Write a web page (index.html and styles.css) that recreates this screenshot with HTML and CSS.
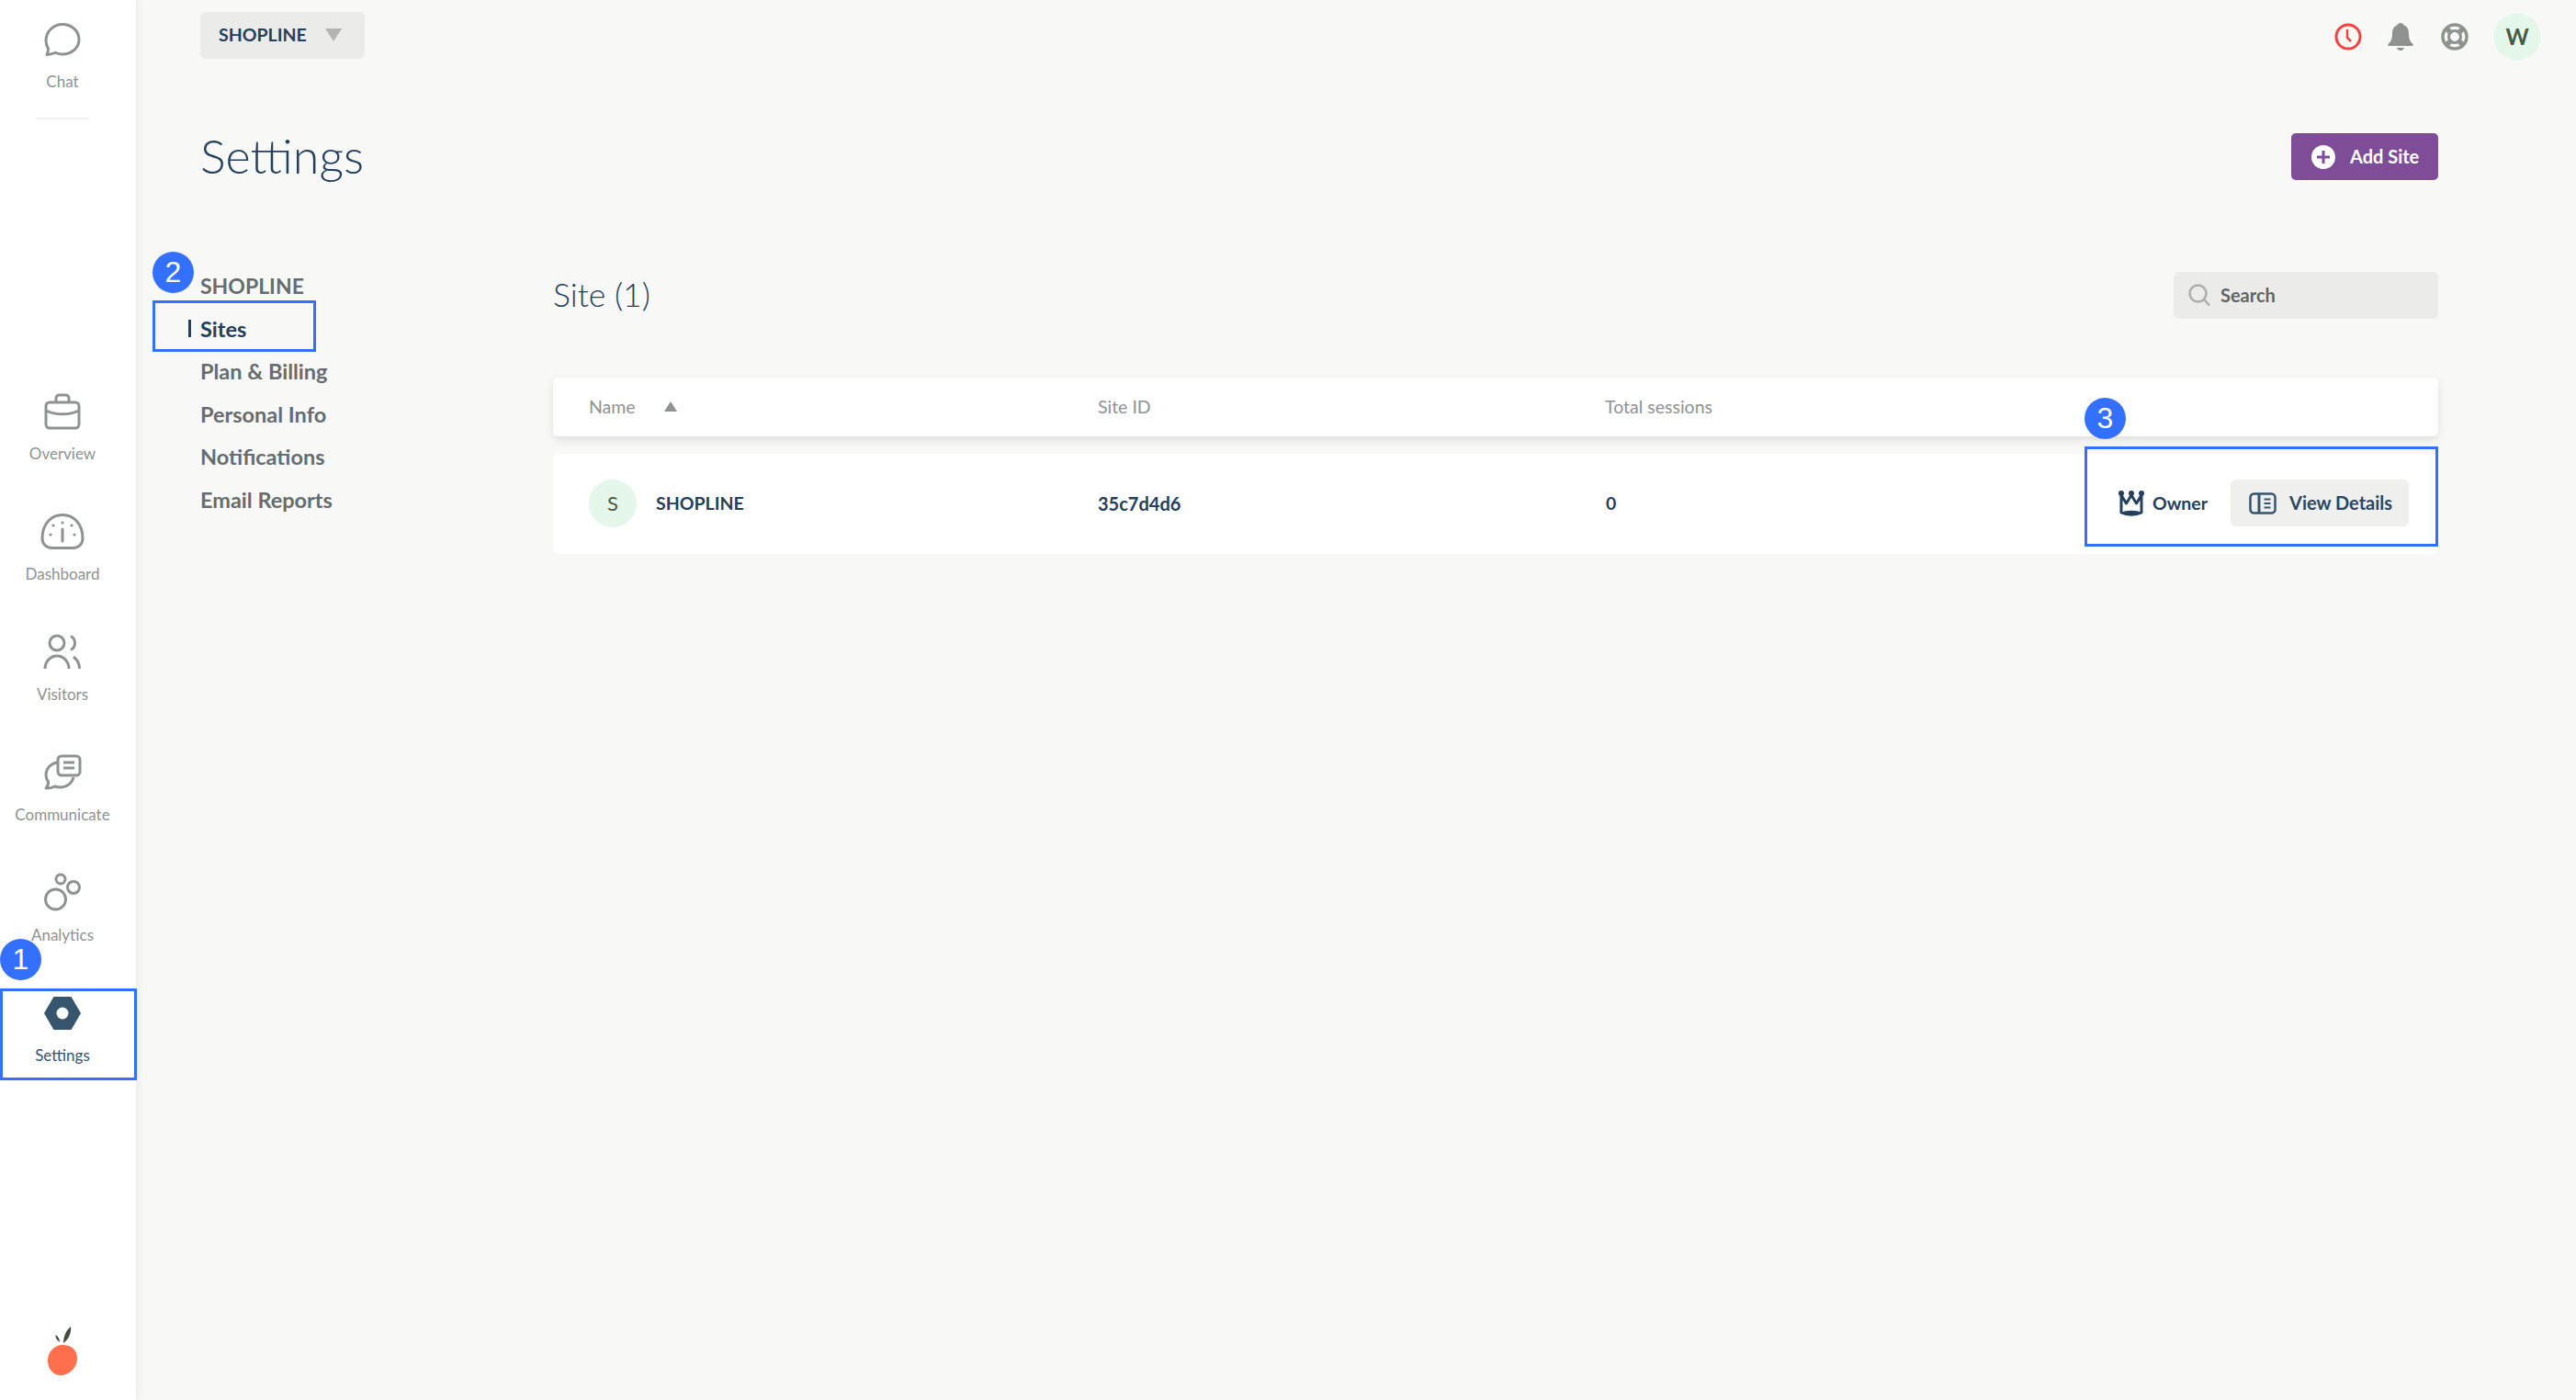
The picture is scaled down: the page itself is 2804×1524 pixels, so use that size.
FILE: index.html
```html
<!DOCTYPE html>
<html lang="en">
<head>
<meta charset="utf-8">
<title>Settings</title>
<link rel="stylesheet" href="styles.css">
</head>
<body>
<div class="app">
  <aside class="sidebar">
    <a class="nav-item">
      <span class="nav-icon"><svg width="40" height="40" viewBox="0 0 40 40"><path d="M3 36.500c.9-2.200 1.700-4.300 1.500-6.500C2.900 27.500 2 24.500 2 21.500 2 11.500 9.800 3.500 20 3.500s18 7.600 18 16.500S30.200 36 20 36c-2.800 0-5.200-.7-7.500-1.700-3 1-6 2-9.500 2.200z" fill="none" stroke="#8e9392" stroke-width="3" stroke-linejoin="round"/></svg></span>
      <span class="nav-label">Chat</span>
    </a>
    <div class="nav-divider"></div>
    <nav class="nav-list">
      <a class="nav-item">
        <span class="nav-icon"><svg width="40" height="40" viewBox="0 0 40 40" fill="none" stroke="#8e9392" stroke-width="3"><rect x="2" y="10" width="36" height="28" rx="4"/><path d="M13 10V5.500C13 3.500 14.500 2 16.500 2h7C25.500 2 27 3.500 27 5.500V10"/><path d="M2 19c11 5 25 5 36 0"/></svg></span>
        <span class="nav-label">Overview</span>
      </a>
      <a class="nav-item">
        <span class="nav-icon"><svg width="48" height="40" viewBox="0 0 48 40" fill="none" stroke="#8e9392" stroke-width="3"><path d="M2 27C2 11 12 1.500 24 1.500S46 11 46 27c0 7-5 10.500-11 10.500H13C7 37.500 2 34 2 27z"/><path d="M24 17v13" stroke-linecap="round"/><g fill="#8e9392" stroke="none"><circle cx="24" cy="10" r="1.600"/><circle cx="14" cy="13" r="1.600"/><circle cx="34" cy="13" r="1.600"/><circle cx="11" cy="23" r="1.600"/><circle cx="37" cy="23" r="1.600"/></g></svg></span>
        <span class="nav-label">Dashboard</span>
      </a>
      <a class="nav-item">
        <span class="nav-icon"><svg width="42" height="40" viewBox="0 0 42 40" fill="none" stroke="#8e9392" stroke-width="3"><circle cx="15" cy="10" r="8"/><path d="M30 2.500c2.800 1.500 4.500 4.300 4.500 7.500s-1.700 6-4.500 7.500"/><path d="M2 38c0-8 6-14 13-14s13 6 13 14"/><path d="M33 25c4 3 6.500 8 6.500 13"/></svg></span>
        <span class="nav-label">Visitors</span>
      </a>
      <a class="nav-item">
        <span class="nav-icon"><svg width="42" height="40" viewBox="0 0 42 40" fill="none" stroke="#8e9392" stroke-width="3" stroke-linejoin="round"><path d="M15 9C7.500 10.500 3 16 3 22.500c0 3 1 5.500 2.500 7.500.3 2.500-.7 5-2.500 7 3.500.3 6.500-.4 9.500-2 2 .7 4 1 6 1 7.500 0 13-4.500 14.500-11"/><rect x="16" y="2" width="24" height="21" rx="4" fill="#fff"/><path d="M22 9h12M22 15h12"/></svg></span>
        <span class="nav-label">Communicate</span>
      </a>
      <a class="nav-item">
        <span class="nav-icon"><svg width="40" height="44" viewBox="0 0 40 44" fill="none" stroke="#8e9392" stroke-width="3"><circle cx="12.500" cy="29" r="11"/><circle cx="18" cy="7" r="5"/><circle cx="32" cy="16" r="6.500"/></svg></span>
        <span class="nav-label">Analytics</span>
      </a>
      <a class="nav-item nav-item-active">
        <span class="nav-icon"><svg width="40" height="40" viewBox="0 0 40 40"><path d="M10.500 2h19L40 20 29.500 38h-19L0 20z" fill="#36556f"/><circle cx="20" cy="20" r="6.500" fill="#fff"/></svg></span>
        <span class="nav-label">Settings</span>
      </a>
    </nav>
    <div class="logo">
      <svg width="34" height="54" viewBox="0 0 34 54"><path d="M17 20c9 0 16 5 16 15 0 9-8 17-16 18C8 54 1 47 1 37 1 28 8 20 17 20z" fill="#ff6f4d"/><path d="M18 18c0-7 3-14 8-18 1 6-2 14-8 18z" fill="#454c3f"/><path d="M14 17c-3-2-5-5-4.500-8 2.500 1.500 4.500 4.500 4.500 8z" fill="#454c3f"/></svg>
    </div>
  </aside>

  <main class="main">
    <header class="topbar">
      <button class="site-select">
        <span>SHOPLINE</span>
        <svg class="caret" width="18" height="14" viewBox="0 0 18 14"><path d="M0 0h18L9 14z" fill="#b3b4b1"/></svg>
      </button>
      <div class="top-icons">
        <svg class="top-icon" width="30" height="30" viewBox="0 0 30 30" fill="none" stroke="#f5413f" stroke-width="3"><circle cx="15" cy="15" r="13"/><path d="M14 7v9l4 4" stroke-width="2.500"/></svg>
        <svg class="top-icon" width="28" height="30" viewBox="0 0 28 30"><path d="M14 0c2 0 3 1 3.500 2.300C22 4 23 8 23 12c0 4.500 1 8 4.500 11 .6.600.4 2-.8 2H1.300C.1 25-.1 23.600.5 23 4 20 5 16.500 5 12c0-4 1-8 5.500-9.700C11 1 12 0 14 0z" fill="#8e9392"/><path d="M10 27h8c-.6 2-2 3-4 3s-3.400-1-4-3z" fill="#8e9392"/></svg>
        <svg class="top-icon" width="30" height="30" viewBox="0 0 30 30" fill="none" stroke="#8e9392"><circle cx="15" cy="15" r="13" stroke-width="3.500"/><circle cx="15" cy="15" r="6.500" stroke-width="3"/><path d="M5.500 5.500l6 6M24.500 5.500l-6 6M5.500 24.500l6-6M24.500 24.500l-6-6" stroke-width="5.500"/></svg>
        <div class="avatar avatar-user">W</div>
      </div>
    </header>

    <div class="page">
      <div class="page-head">
        <h1 class="page-title">Settings</h1>
        <button class="btn-add">
          <svg width="26" height="26" viewBox="0 0 26 26"><circle cx="13" cy="13" r="13" fill="#fff"/><path d="M13 6v14M6 13h14" stroke="#7f4d97" stroke-width="3"/></svg>
          <span>Add Site</span>
        </button>
      </div>

      <div class="columns">
        <nav class="settings-nav">
          <div class="settings-group">SHOPLINE</div>
          <a class="settings-link settings-link-active">Sites</a>
          <a class="settings-link">Plan &amp; Billing</a>
          <a class="settings-link">Personal Info</a>
          <a class="settings-link">Notifications</a>
          <a class="settings-link">Email Reports</a>
        </nav>

        <section class="content">
          <div class="content-head">
            <h2 class="content-title">Site (1)</h2>
            <div class="search">
              <svg width="24" height="25" viewBox="0 0 24 25" fill="none" stroke="#adaeac" stroke-width="2.500"><circle cx="10.500" cy="10.500" r="9"/><path d="M17 17l6 6.500"/></svg>
              <span>Search</span>
            </div>
          </div>

          <div class="table-row table-header">
            <div class="th-name"><span>Name</span><svg width="14" height="11" viewBox="0 0 14 11"><path d="M7 0l7 11H0z" fill="#8e9392"/></svg></div>
            <div>Site ID</div>
            <div>Total sessions</div>
            <div></div>
          </div>

          <div class="table-row table-body">
            <div class="site-cell"><div class="avatar avatar-site">S</div><span>SHOPLINE</span></div>
            <div class="site-id">35c7d4d6</div>
            <div class="session-count">0</div>
            <div class="actions">
              <span class="owner">
                <svg width="28" height="28" viewBox="0 0 28 28"><path d="M3 5l5.500 9L14 5l5.500 9L25 5v19c-6 3-16 3-22 0z" fill="none" stroke="#23405c" stroke-width="3" stroke-linejoin="round"/><path d="M3 24c5-3 17-3 22 0-5 4-17 4-22 0z" fill="#23405c"/><circle cx="3" cy="3" r="3" fill="#23405c"/><circle cx="14" cy="3" r="3" fill="#23405c"/><circle cx="25" cy="3" r="3" fill="#23405c"/></svg>
                <span>Owner</span>
              </span>
              <button class="btn-details">
                <svg width="30" height="24" viewBox="0 0 30 24" fill="none" stroke="#36556f" stroke-width="2.500"><rect x="1.500" y="1.500" width="27" height="21" rx="4"/><path d="M11 1.500v21" stroke-width="3"/><path d="M16.500 7.500h7M16.500 12h7M16.500 16.500h7" stroke-width="1.800"/></svg>
                <span>View Details</span>
              </button>
            </div>
          </div>
        </section>
      </div>
    </div>
  </main>
</div>

<div class="mark mark-settings"></div>
<div class="mark mark-sites"></div>
<div class="mark mark-actions"></div>
<div class="badge badge-1">1</div>
<div class="badge badge-2">2</div>
<div class="badge badge-3">3</div>
</body>
</html>
```
FILE: styles.css
```css
* { box-sizing: border-box; }

html, body {
  margin: 0;
  height: 1524px;
  overflow: hidden;
}

body {
  position: relative;
  width: 2804px;
  background: #f8f8f6;
  font-family: Lato, "Open Sans", sans-serif;
  color: #23405c;
}

button {
  border: 0;
  font: inherit;
  cursor: pointer;
}

.app {
  display: flex;
  height: 100%;
}

/* Sidebar */
.sidebar {
  flex: 0 0 148px;
  display: flex;
  flex-direction: column;
  align-items: center;
  padding: 23px 12px 0 0;
  background: #fff;
  box-shadow: 2px 0 8px rgba(0, 0, 0, 0.06);
}

.nav-item {
  display: flex;
  flex-direction: column;
  align-items: center;
  gap: 16px;
  height: 76px;
  width: 100%;
}

.nav-icon {
  display: flex;
  justify-content: center;
  align-items: center;
  height: 40px;
}

.nav-label {
  height: 20px;
  font-size: 17px;
  line-height: 20px;
  white-space: nowrap;
  color: #8e9392;
}

.nav-item-active .nav-label { color: #36556f; }

.nav-divider {
  width: 58px;
  height: 2px;
  margin-top: 29px;
  background: #f1f1f0;
}

.nav-list {
  display: flex;
  flex-direction: column;
  gap: 55px;
  width: 100%;
  margin-top: 298px;
}

.logo {
  margin-top: auto;
  height: 80px;
}

/* Main */
.main {
  flex: 1;
  display: flex;
  flex-direction: column;
  min-width: 0;
}

.topbar {
  display: flex;
  justify-content: space-between;
  align-items: flex-start;
  height: 145px;
  padding: 13px 37px 0 70px;
}

.site-select {
  display: flex;
  align-items: center;
  gap: 20px;
  width: 179px;
  height: 51px;
  padding: 0 0 2px 20px;
  border-radius: 6px;
  background: #ebebe9;
  color: #23405c;
  font-size: 19.500px;
  font-weight: 700;
}

.top-icons {
  display: flex;
  align-items: center;
  height: 54px;
}

.top-icon { flex: none; margin-right: 28px; }
.top-icon:nth-child(2) { margin-right: 30px; }
.top-icon:nth-child(3) { margin-right: 26px; }

.avatar {
  display: flex;
  justify-content: center;
  align-items: center;
  flex: none;
  border-radius: 50%;
  background: #e5f6ea;
  color: #4b5a45;
}

.avatar-user {
  width: 54px;
  height: 54px;
  padding-bottom: 2px;
  border: 1px solid #fff;
  font-size: 24px;
  font-weight: 700;
}

.avatar-site {
  width: 52px;
  height: 52px;
  font-size: 22px;
  font-weight: 400;
}

.page {
  padding: 0 150px 0 70px;
}

.page-head {
  display: flex;
  justify-content: space-between;
  align-items: center;
  height: 51px;
}

.page-title {
  margin: -3px 0 0;
  font-size: 52px;
  font-weight: 300;
  color: #23405c;
}

.btn-add {
  display: flex;
  align-items: center;
  gap: 16px;
  width: 160px;
  height: 51px;
  padding: 0 0 2px 22px;
  border-radius: 5px;
  background: #7f4d97;
  color: #fff;
  font-size: 20px;
  font-weight: 700;
}

.btn-add svg { margin-top: 2px; }

.columns {
  display: flex;
  margin-top: 100px;
}

.settings-nav {
  flex: 0 0 384px;
  display: flex;
  flex-direction: column;
  margin-top: -8px;
  font-size: 23.500px;
  font-weight: 700;
  color: #666d71;
}

.settings-group,
.settings-link {
  height: 46.500px;
  line-height: 46.500px;
  white-space: nowrap;
}

.settings-group { font-size: 23px; }

.settings-link-active {
  position: relative;
  color: #23405c;
}

.settings-link-active::before {
  content: "";
  position: absolute;
  left: -13px;
  top: 13px;
  width: 3px;
  height: 19px;
  background: #23405c;
}

.content {
  flex: 1;
  min-width: 0;
}

.content-head {
  display: flex;
  justify-content: space-between;
  align-items: center;
  height: 51px;
}

.content-title {
  margin: -2px 0 0;
  font-size: 35.500px;
  font-weight: 300;
  color: #23405c;
}

.search {
  display: flex;
  align-items: center;
  gap: 11px;
  width: 288px;
  height: 51px;
  padding-left: 16px;
  border-radius: 6px;
  background: #ebebe9;
  color: #5f666a;
  font-size: 20px;
  font-weight: 700;
}

.search span { margin-bottom: 2px; }

.table-row {
  display: grid;
  grid-template-columns: 554px 552px 1fr auto;
  align-items: center;
  padding-left: 39px;
  background: #fff;
  border-radius: 6px;
}

.table-header {
  height: 64px;
  margin-top: 64px;
  padding-bottom: 2px;
  font-size: 19.500px;
  color: #8e9392;
  box-shadow: 0 4px 10px rgba(0, 0, 0, 0.1);
}

.th-name {
  display: flex;
  align-items: center;
  gap: 31px;
}

.table-body {
  height: 109px;
  margin-top: 19px;
  padding-bottom: 2px;
  font-size: 19.500px;
  font-weight: 700;
  color: #23405c;
}

.site-cell {
  display: flex;
  align-items: center;
  gap: 21px;
}

.site-id { font-size: 20px; }

.session-count { padding-left: 1px; }

.actions {
  display: flex;
  align-items: center;
  padding-right: 32px;
}

.owner {
  display: flex;
  align-items: center;
  gap: 9px;
  margin-right: 25px;
}

.btn-details {
  display: flex;
  align-items: center;
  gap: 14px;
  width: 194px;
  height: 51px;
  padding: 0 0 0 20px;
  border-radius: 6px;
  background: #efefed;
  color: #2b4760;
  font-size: 20px;
  font-weight: 700;
}

.btn-details span { margin-bottom: 2px; }

/* Annotation overlays */
.mark {
  position: absolute;
  border: 3px solid #3370ff;
}

.mark-settings { left: 0; top: 1076px; width: 149px; height: 100px; }
.mark-sites { left: 166px; top: 327px; width: 178px; height: 56px; }
.mark-actions { left: 2269px; top: 486px; width: 385px; height: 109px; }

.badge {
  position: absolute;
  display: flex;
  justify-content: center;
  align-items: center;
  width: 45px;
  height: 45px;
  border-radius: 50%;
  background: #3370ff;
  color: #fff;
  font-family: "Liberation Sans", sans-serif;
  font-size: 32px;
}

.badge-1 { left: 0; top: 1022px; }
.badge-2 { left: 166px; top: 274px; }
.badge-3 { left: 2269px; top: 433px; }
```
